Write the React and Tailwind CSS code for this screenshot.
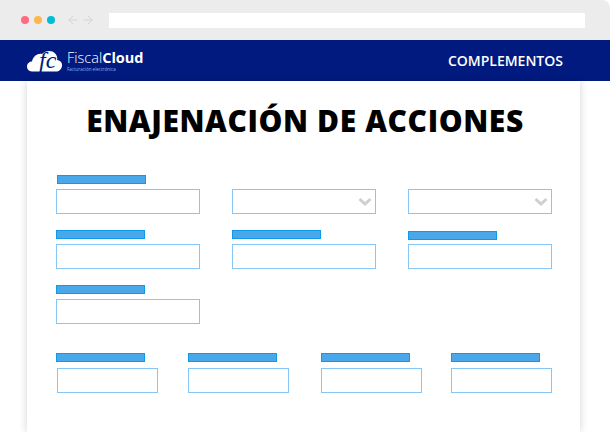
import { ArrowLeft, ArrowRight } from 'lucide-react';

const Label = ({ className = '' }) => (
  <div className={`h-[9px] w-[89px] border border-[#0d9be8] bg-[#4aa8ea] ${className}`} />
);

const Box = ({ className = '', select = false }) => (
  <div className={`relative h-[25px] border border-[#85c6f6] bg-white ${className}`}>
    {select && (
      <svg className="absolute right-[3px] top-[7px]" width="14" height="10" viewBox="0 0 14 10" fill="none">
        <path d="M1.5 2 L7 7 L12.5 2" stroke="#cfcfcf" strokeWidth="3" />
      </svg>
    )}
  </div>
);

function Logo() {
  return (
    <div className="flex items-center gap-[4px]">
      <div className="relative h-[22px] w-[36px]">
        <svg width="36" height="22" viewBox="0 0 36 22">
          <path
            d="M5 21.5 C1.5 21.5 0 18.5 0 16.5 C0 13.5 2.5 11.5 5 11.5 C6 6 11 3 15 4 C19 0 26 0 29 4.5 C30.5 7 30.5 9 30 10 C33.5 10.5 35.5 13 35 16 C34.5 19.5 32 21.5 29 21.5 Z"
            fill="#ffffff"
          />
        </svg>
        <span className="absolute left-[12px] top-[-2px] font-['Liberation_Serif',serif] text-[24px] italic leading-[25px] text-[#001a80]">
          fc
        </span>
      </div>
      <div className="flex flex-col">
        <div className="text-[14.5px] leading-[15px] text-white">
          <span className="font-light">Fiscal</span>
          <span className="font-bold">Cloud</span>
        </div>
        <div className="mt-[2px] text-[4.5px] leading-[5px] text-[#8fb4ee]">Facturación electrónica</div>
      </div>
    </div>
  );
}

export default function App() {
  return (
    <div className="h-[432px] w-[610px] overflow-hidden bg-white font-['Open_Sans',sans-serif]">
      <div className="flex h-[40px] items-center rounded-tr-lg bg-[#ececec] pl-[21px] pr-[25px]">
        <div className="flex items-center gap-[5px]">
          <span className="h-[8px] w-[8px] rounded-full bg-[#ff6b81]" />
          <span className="h-[8px] w-[8px] rounded-full bg-[#ffb74d]" />
          <span className="h-[8px] w-[8px] rounded-full bg-[#00bcd4]" />
        </div>
        <div className="ml-[11px] flex items-center gap-[1px] text-[#d2d2d2]">
          <ArrowLeft size={14} strokeWidth={1.6} />
          <ArrowRight size={14} strokeWidth={1.6} />
        </div>
        <div className="ml-[14px] h-[15px] flex-1 bg-white" />
      </div>

      <div className="flex h-[41px] items-center justify-between bg-[#001a80] pl-[27px] pr-[47px]">
        <Logo />
        <span className="text-[14px] font-semibold text-white">COMPLEMENTOS</span>
      </div>

      <div className="ml-[27px] mr-[30px] h-[351px] bg-white pl-[29px] pr-[26px] shadow-[0_0_8px_rgba(0,0,0,0.18)]">
        <h1 className="pt-[19px] text-center text-[30px] font-extrabold leading-[42px] tracking-[0.6px] text-black">
          ENAJENACIÓN DE ACCIONES
        </h1>

        <div className="mt-[33px] grid w-[496px] grid-cols-3 gap-x-[32px] gap-y-[16px]">
          <div className="flex flex-col gap-[5px]">
            <Label className="ml-px" />
            <Box />
          </div>
          <div className="flex flex-col justify-end">
            <Box select />
          </div>
          <div className="flex flex-col justify-end">
            <Box select />
          </div>
          <div className="flex flex-col gap-[5px]">
            <Label />
            <Box />
          </div>
          <div className="flex flex-col gap-[5px]">
            <Label />
            <Box />
          </div>
          <div className="flex flex-col gap-[4px] pt-px">
            <Label />
            <Box />
          </div>
          <div className="flex flex-col gap-[5px]">
            <Label />
            <Box />
          </div>
        </div>

        <div className="mt-[29px] flex w-[496px]">
          <div className="flex w-[102px] flex-col gap-[6px]">
            <Label />
            <Box className="ml-px w-[101px]" />
          </div>
          <div className="ml-[30px] flex w-[101px] flex-col gap-[6px]">
            <Label />
            <Box />
          </div>
          <div className="ml-[32px] flex w-[101px] flex-col gap-[6px]">
            <Label />
            <Box />
          </div>
          <div className="ml-[29px] flex w-[101px] flex-col gap-[6px]">
            <Label />
            <Box />
          </div>
        </div>
      </div>
    </div>
  );
}
